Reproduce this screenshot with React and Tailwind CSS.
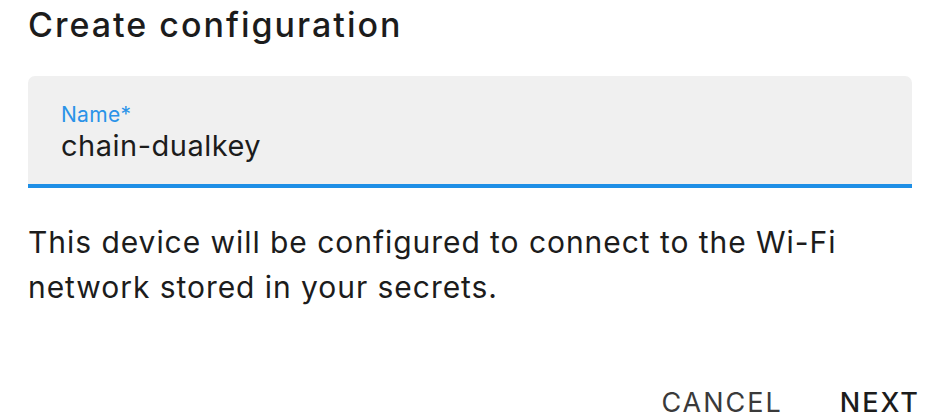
export default function App() {
  return (
    <div className="w-[932px] h-[420px] overflow-hidden bg-white text-[#1c1c1c] font-['Inter',sans-serif]">
      <div className="pl-[28px] pr-[20px]">
        <h2 className="pt-[5px] h-[76px] text-[34px] leading-[40px] font-medium tracking-[2px]">Create configuration</h2>

        <div className="rounded-t-[7px] bg-[#f0f0f0] border-b-[4px] border-[#1e8fe6] h-[112px] pl-[33px] pt-[27px]">
          <div className="text-[21px] leading-[24px] text-[#2a93e8] tracking-[0.3px]">Name*</div>
          <div className="text-[29px] leading-[36px] mt-[1px] tracking-[0.5px]">chain-dualkey</div>
        </div>

        <p className="mt-[32px] text-[30px] leading-[45px] tracking-[0.95px]">
          This device will be configured to connect to the Wi-Fi network stored in your secrets.
        </p>

        <div className="flex justify-end gap-[57px] pt-[78px] mr-[-8px]">
          <button className="text-[27px] leading-[30px] uppercase tracking-[2px] text-[#3a3a3a]">Cancel</button>
          <button className="text-[27px] leading-[30px] uppercase tracking-[2px] font-medium text-[#1c1c1c]">Next</button>
        </div>
      </div>
    </div>
  )
}
